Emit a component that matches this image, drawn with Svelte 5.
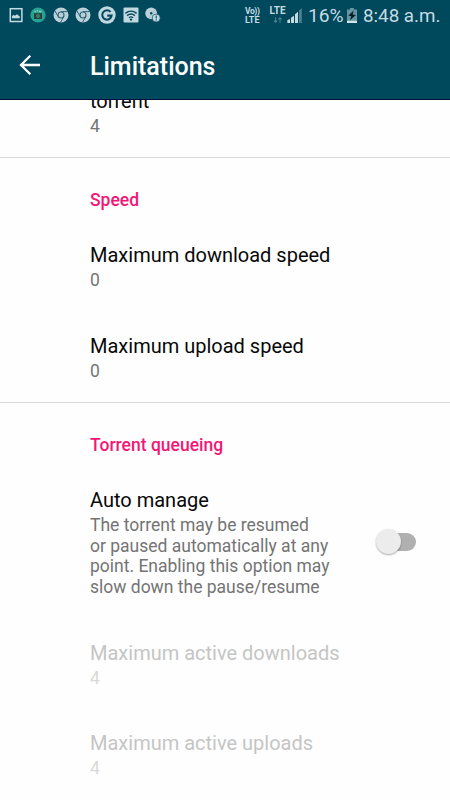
<script>
  const queue = [
    { title: 'Maximum active downloads', value: '4' },
    { title: 'Maximum active uploads', value: '4' }
  ];
  const speeds = [
    { title: 'Maximum download speed', value: '0' },
    { title: 'Maximum upload speed', value: '0' }
  ];
</script>

{#snippet chrome()}
  <svg width="16" height="16" viewBox="0 0 16 16">
    <circle cx="8" cy="8" r="7.5" fill="#b9d0d8" />
    <circle cx="8" cy="8" r="3" fill="none" stroke="#2b6477" stroke-width="1.1" />
    <path d="M8 4.6h6.6M5.2 9.6L2 4M10.8 9.7L7.6 15.2" stroke="#2b6477" stroke-width="1" fill="none" />
  </svg>
{/snippet}

<div class="screen">
  <header>
    <div class="status">
      <div class="notes">
        <svg width="14" height="16" viewBox="0 0 14 16">
          <rect x="1.3" y="1.7" width="11.6" height="12.8" fill="none" stroke="#c4dbe2" stroke-width="1.5" />
          <path d="M3 11.2V9.3l1.6-1.5 1.3 1L8 7.2l2.8 2.4v1.6z" fill="#c4dbe2" />
        </svg>
        <svg width="16" height="16" viewBox="0 0 16 16">
          <circle cx="8" cy="8" r="7.6" fill="#26a291" />
          <path d="M4 6.2h8v5.8H4z" fill="#26443e" />
          <path d="M4.3 4.5h1.5M6.8 3.8h1.3M9 4.5h2.5" stroke="#90cbbf" stroke-width="1.4" />
          <circle cx="8" cy="9" r="1.8" fill="#579b8b" />
          <circle cx="8" cy="9" r=".8" fill="#213c38" />
        </svg>
        {@render chrome()}
        {@render chrome()}
        <svg width="18" height="18" viewBox="0 0 18 18">
          <circle cx="9" cy="9" r="8.7" fill="#c0d8df" />
          <path d="M12.5 5.9A4.7 4.7 0 1 0 13.6 9.6H9.3" fill="none" stroke="#07495e" stroke-width="2.1" />
        </svg>
        <svg width="16" height="16" viewBox="0 0 16 16">
          <rect x=".5" y=".5" width="15" height="15" rx="1" fill="#c0d8df" />
          <path d="M2.4 6.4q5.6-4.6 11.2 0M4.1 8.6q3.9-3.2 7.8 0M5.9 10.7q2.1-1.7 4.2 0" fill="none" stroke="#07495e" stroke-width="1.4" />
          <circle cx="8" cy="12.6" r="1.2" fill="#07495e" />
        </svg>
        <svg class="disc" width="16" height="16" viewBox="0 0 16 16">
          <circle cx="6.2" cy="6.3" r="5.9" fill="#b9d0d8" />
          <path d="M6.2 6.3L10 3.4M6.2 6.3L4.7 11.5" stroke="#9dbcc6" stroke-width=".8" />
          <circle cx="6.2" cy="6.3" r="1.2" fill="#07495e" />
          <circle cx="11.2" cy="11" r="4" fill="#c4dbe2" stroke="#07495e" stroke-width=".7" />
          <path d="M11.2 8.6v2.8M11.2 12.2v1.2" stroke="#07495e" stroke-width="1.1" />
        </svg>
      </div>
      <div class="volte"><span class="vo">Vo))</span><span>LTE</span></div>
      <div class="lte">
        <span>LTE</span>
        <svg width="10" height="6" viewBox="0 0 10 6"><path d="M2.6.3v5M1 3.6l1.6 1.7 1.6-1.7M7 5.7v-5M5.4 2.4L7 .7l1.6 1.7" fill="none" stroke="#4b8090" stroke-width="1.1" /></svg>
      </div>
      <svg class="signal" width="16" height="16" viewBox="0 0 16 16">
        <path d="M.3 12.2L3 11v4H.3zM4 9.8l3-2V15H4zM8 6.3l3-2.6V15H8z" fill="#c4dbe2" />
        <path d="M12 2.4L14.8 0v15H12z" fill="#4b8090" />
      </svg>
      <span class="pct">16%</span>
      <svg class="battery" width="10" height="16" viewBox="0 0 10 16">
        <path d="M3 0h4v2H3zM0 1.5h10V13H0z" fill="#6595a2" />
        <path d="M0 12.8h10V15H0z" fill="#d1e4e9" />
        <path d="M6.7 2.4L1.3 7.8l3 .5L2.8 12.6 8.8 7l-3.2-.6z" fill="#061c24" />
      </svg>
      <span class="time">8:48 a.m.</span>
    </div>
    <div class="toolbar">
      <svg width="22" height="22" viewBox="0 0 22 22">
        <path d="M21 11H2.5M11.3 1.7L2 11l9.3 9.3" fill="none" stroke="#fff" stroke-width="2.3" />
      </svg>
      <h1>Limitations</h1>
    </div>
  </header>

  <main>
    <section class="first">
      <div class="item"><div class="title">torrent</div><div class="summary">4</div></div>
    </section>
    <section>
      <h2>Speed</h2>
      {#each speeds as s}
        <div class="item"><div class="title">{s.title}</div><div class="summary">{s.value}</div></div>
      {/each}
    </section>
    <section>
      <h2>Torrent queueing</h2>
      <div class="item auto">
        <div>
          <div class="title">Auto manage</div>
          <div class="summary">The torrent may be resumed<br />or paused automatically at any<br />point. Enabling this option may<br />slow down the pause/resume</div>
        </div>
        <div class="switch"><div class="thumb"></div></div>
      </div>
      {#each queue as q}
        <div class="item disabled"><div class="title">{q.title}</div><div class="summary">{q.value}</div></div>
      {/each}
    </section>
  </main>
</div>

<style>
  .screen {
    width: 450px;
    height: 800px;
    overflow: hidden;
    background: #fefefe;
    font-family: Roboto, sans-serif;
    display: flex;
    flex-direction: column;
  }
  header {
    flex: none;
    box-sizing: border-box;
    height: 100px;
    background: #00485c;
    border-bottom: 1px solid #05123f;
  }
  .status {
    height: 31px;
    display: flex;
    align-items: center;
    color: #c4dbe2;
    padding-left: 9px;
    white-space: nowrap;
  }
  svg { display: block; flex: none; }
  .notes {
    display: flex;
    align-items: center;
    gap: 6.8px;
    width: 236px;
    flex: none;
    margin-top: -1px;
  }
  .disc { margin-left: -1px; }
  .volte, .lte {
    display: flex;
    flex-direction: column;
    flex: none;
    font-size: 9px;
    line-height: 8.5px;
    font-weight: 700;
  }
  .volte { width: 22px; }
  .vo { font-size: 8.5px; letter-spacing: -0.4px; }
  .lte { width: 21px; font-size: 10px; align-items: center; margin-right: -1px; gap: 2px; margin-top: -1px; }
  .signal { margin-top: 1px; }
  .pct { font-size: 19.2px; margin-left: 5px; width: 34px; }
  .battery { margin-left: 5px; }
  .time { font-size: 18.8px; margin-left: 6px; }
  .toolbar {
    height: 68px;
    display: flex;
    align-items: center;
    padding-left: 19px;
  }
  h1 {
    margin: 4px 0 0 49px;
    font-size: 25px;
    line-height: 30px;
    font-weight: 500;
    color: #fff;
  }
  main { flex: 1; min-height: 0; overflow: hidden; }
  section + section { border-top: 1px solid #dadada; }
  section { padding-left: 90px; }
  .first { margin-top: -33.5px; height: 90.5px; }
  h2 {
    margin: 0;
    padding-top: 32px;
    height: 31px;
    font-size: 17.5px;
    line-height: 21px;
    font-weight: 500;
    color: #f41677;
  }
  .item { padding: 22px 0 21px; }
  .title {
    font-size: 20px;
    line-height: 24px;
    color: #080808;
  }
  .summary {
    margin-top: 3px;
    font-size: 17.5px;
    line-height: 20.6px;
    color: #747474;
  }
  .auto {
    display: flex;
    justify-content: space-between;
    align-items: center;
    padding-right: 34px;
    padding-bottom: 21px;
  }
  .switch {
    width: 34px;
    height: 18px;
    border-radius: 9px;
    background: #b0b0b0;
    display: flex;
    align-items: center;
    margin-top: -2px;
  }
  .thumb {
    flex: none;
    width: 25px;
    height: 25px;
    margin-left: -6px;
    border-radius: 50%;
    background: #ececec;
    box-shadow: 0 1px 2px #0005;
  }
  .disabled .title { color: #c5c5c5; }
  .disabled .summary { color: #d8d8d8; }
</style>
